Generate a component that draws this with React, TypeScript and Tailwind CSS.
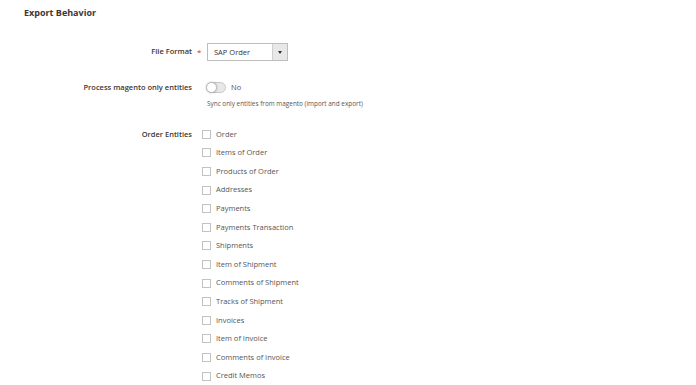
const entities = [
  "Order",
  "Items of Order",
  "Products of Order",
  "Addresses",
  "Payments",
  "Payments Transaction",
  "Shipments",
  "Item of Shipment",
  "Comments of Shipment",
  "Tracks of Shipment",
  "Invoices",
  "Item of Invoice",
  "Comments of Invoice",
  "Credit Memos",
];

export default function App() {
  return (
    <div className="w-[696px] h-[385px] overflow-hidden bg-white font-['Open_Sans',sans-serif] text-[#41362f]">
      <h2 className="pl-6 pt-[7px] text-[9px] leading-[12px] font-bold text-[#41362f]">
        Export Behavior
      </h2>

      <div className="mt-[24px] flex items-center h-[18px]">
        <label className="w-[192px] text-right text-[7.5px] font-semibold">File Format</label>
        <span className="w-[15px] pl-[5px] text-[8px] text-[#e22626] leading-none">*</span>
        <div className="flex w-[81px] h-[18px] border border-[#bdbdbd] bg-white">
          <span className="flex-1 pl-[6px] text-[7.5px] leading-[16px] text-[#303030]">SAP Order</span>
          <span className="w-[15px] border-l border-[#cfcfcf] bg-[#e8e8e8] flex items-center justify-center">
            <span className="w-0 h-0 border-l-[2px] border-r-[2px] border-t-[3px] border-l-transparent border-r-transparent border-t-[#303030]" />
          </span>
        </div>
      </div>

      <div className="mt-[21px] flex items-center h-[11px]">
        <label className="w-[192px] text-right text-[7.5px] font-semibold">Process magento only entities</label>
        <div className="ml-[14px] w-[20px] h-[11px] rounded-full border border-[#c8c8c8] bg-[#e8e8e8] relative">
          <span className="absolute left-[-1px] top-[-1px] w-[11px] h-[11px] rounded-full bg-white border border-[#bdbdbd] shadow-[0_0_2px_rgba(0,0,0,0.25)]" />
        </div>
        <span className="ml-[5px] text-[7.5px] text-[#555]">No</span>
      </div>
      <p className="mt-[7px] ml-[207px] text-[6.4px] leading-[8px] text-[#555]">
        Sync only entities from magento (import and export)
      </p>

      <div className="mt-[17px] flex">
        <label className="w-[192px] h-[18.6px] flex items-center justify-end text-[7.5px] font-semibold">
          Order Entities
        </label>
        <div className="ml-[10px] flex flex-col">
          {entities.map((name) => (
            <div key={name} className="h-[18.6px] flex items-center">
              <span className="w-[9px] h-[9px] border border-[#c2c2c2] bg-white" />
              <span className="ml-[5px] text-[7.5px] text-[#555]">{name}</span>
            </div>
          ))}
        </div>
      </div>
    </div>
  );
}
